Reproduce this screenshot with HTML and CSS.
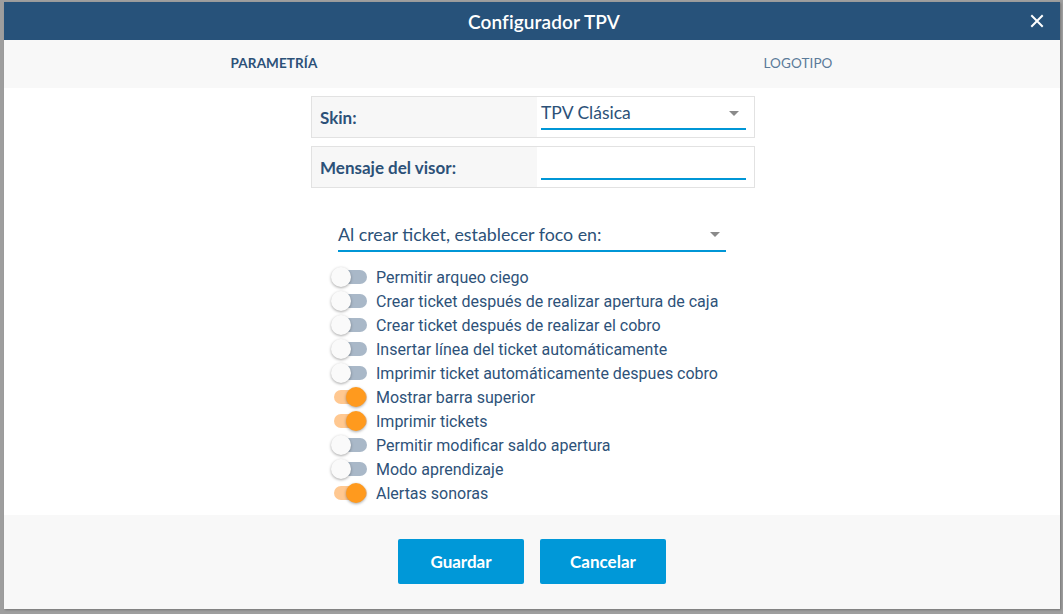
FILE: index.html
```html
<!DOCTYPE html>
<html lang="es">
<head>
<meta charset="utf-8">
<title>Configurador TPV</title>
<link rel="stylesheet" href="styles.css">
</head>
<body>
<div class="dialog">
  <header class="dlg-header">
    <h1 class="dlg-title">Configurador TPV</h1>
    <button class="dlg-close" aria-label="Cerrar">
      <svg width="14" height="14" viewBox="0 0 14 14"><path d="M2 2 L12 12 M12 2 L2 12" stroke="#fff" stroke-width="2" stroke-linecap="square"/></svg>
    </button>
  </header>
  <nav class="tabs">
    <div class="tab active">PARAMETRÍA</div>
    <div class="tab">LOGOTIPO</div>
  </nav>
  <main class="content">
    <div class="field-box">
      <div class="field-label">Skin:</div>
      <div class="field-input">
        <div class="select">
          <span class="select-text">TPV Clásica</span>
          <span class="caret"></span>
        </div>
      </div>
    </div>
    <div class="field-box">
      <div class="field-label">Mensaje del visor:</div>
      <div class="field-input">
        <div class="select"><span class="select-text"></span></div>
      </div>
    </div>
    <div class="column">
      <div class="select wide">
        <span class="select-text">Al crear ticket, establecer foco en:</span>
        <span class="caret"></span>
      </div>
      <ul class="toggles">
        <li class="toggle-row"><span class="toggle"><span class="thumb"></span></span>Permitir arqueo ciego</li>
        <li class="toggle-row"><span class="toggle"><span class="thumb"></span></span>Crear ticket después de realizar apertura de caja</li>
        <li class="toggle-row"><span class="toggle"><span class="thumb"></span></span>Crear ticket después de realizar el cobro</li>
        <li class="toggle-row"><span class="toggle"><span class="thumb"></span></span>Insertar línea del ticket automáticamente</li>
        <li class="toggle-row"><span class="toggle"><span class="thumb"></span></span>Imprimir ticket automáticamente despues cobro</li>
        <li class="toggle-row"><span class="toggle on"><span class="thumb"></span></span>Mostrar barra superior</li>
        <li class="toggle-row"><span class="toggle on"><span class="thumb"></span></span>Imprimir tickets</li>
        <li class="toggle-row"><span class="toggle"><span class="thumb"></span></span>Permitir modificar saldo apertura</li>
        <li class="toggle-row"><span class="toggle"><span class="thumb"></span></span>Modo aprendizaje</li>
        <li class="toggle-row"><span class="toggle on"><span class="thumb"></span></span>Alertas sonoras</li>
      </ul>
    </div>
  </main>
  <footer class="dlg-footer">
    <button class="btn">Guardar</button>
    <button class="btn">Cancelar</button>
  </footer>
</div>
</body>
</html>
```

FILE: styles.css
```css
* { box-sizing: border-box; }
html, body { margin: 0; padding: 0; }
body {
  background: #9e9e9e;
  width: 1063px;
  height: 614px;
  overflow: hidden;
  font-family: "Lato", "Noto Sans", sans-serif;
}
.dialog {
  margin: 2px 3px 5px 4px;
  width: 1056px;
  height: 607px;
  background: #fff;
  display: flex;
  flex-direction: column;
  box-shadow: 1px 1px 2px rgba(0,0,0,0.25);
}
.dlg-header {
  height: 38px;
  background: #27527a;
  display: flex;
  align-items: center;
  justify-content: center;
  padding-left: 24px;
  position: relative;
}
.dlg-title {
  margin: 0;
  color: #fff;
  font-size: 19px;
  font-weight: 600;
  letter-spacing: 0.1px;
}
.dlg-close {
  position: absolute;
  right: 16px;
  top: 12px;
  width: 14px;
  height: 14px;
  padding: 0;
  border: 0;
  background: transparent;
  display: flex;
}
.tabs {
  height: 48px;
  background: #f8f8f8;
  display: flex;
  padding-left: 8px;
}
.tab {
  flex: 1;
  display: flex;
  align-items: center;
  justify-content: center;
  font-size: 13.5px;
  color: #5b7b9a;
  letter-spacing: 0.1px;
  padding-bottom: 2px;
}
.tab.active {
  color: #2c5178;
  font-weight: 700;
}
.content {
  height: 427px;
  padding-top: 8px;
  padding-left: 2px;
  display: flex;
  flex-direction: column;
  align-items: center;
}
.field-box {
  width: 444px;
  height: 42px;
  border: 1px solid #e2e2e2;
  display: flex;
  margin-bottom: 8px;
}
.field-label {
  width: 225px;
  background: #f7f7f7;
  padding-left: 8px;
  display: flex;
  align-items: center;
  font-size: 17px;
  font-weight: 700;
  color: #2c5178;
}
.field-input {
  flex: 1;
  padding: 0 8px 0 4px;
  display: flex;
  align-items: flex-end;
  padding-bottom: 7px;
}
.select {
  width: 100%;
  height: 30px;
  border-bottom: 2px solid #0096d6;
  display: flex;
  align-items: center;
  justify-content: space-between;
  padding-right: 7px;
}
.select-text {
  font-size: 17.5px;
  color: #2c5178;
  margin-top: -3px;
}
.caret {
  width: 0;
  height: 0;
  border-left: 5px solid transparent;
  border-right: 5px solid transparent;
  border-top: 5px solid #8a8a8a;
  margin-top: -1px;
}
.column {
  width: 388px;
  margin-top: 24px;
  margin-left: -2px;
}
.select.wide {
  height: 32px;
  padding-right: 6px;
}
.select.wide .select-text {
  font-size: 17.8px;
  margin-top: -2px;
}
.toggles {
  list-style: none;
  margin: 13px 0 0 -7px;
  padding: 0;
}
.toggle-row {
  height: 24px;
  display: flex;
  align-items: center;
  font-family: "Roboto", sans-serif;
  font-size: 16px;
  color: #2e5279;
  white-space: nowrap;
}
.toggle {
  position: relative;
  width: 36px;
  height: 20px;
  margin-right: 9px;
  flex: none;
}
.toggle::before {
  content: "";
  position: absolute;
  left: 3px;
  right: 0;
  top: 3px;
  height: 14px;
  border-radius: 7px;
  background: #a9b8c8;
}
.thumb {
  position: absolute;
  left: 0;
  top: 0;
  width: 20px;
  height: 20px;
  border-radius: 50%;
  background: #fafafa;
  box-shadow: 0 1px 3px rgba(0,0,0,0.35);
}
.toggle.on::before { background: #ffc891; }
.toggle.on .thumb {
  left: 15px;
  background: #ff9a1e;
}
.dlg-footer {
  height: 94px;
  background: #f8f8f8;
  display: flex;
  justify-content: center;
  align-items: flex-start;
  padding-top: 24px;
  gap: 16px;
}
.btn {
  width: 126px;
  height: 45px;
  border: 0;
  border-radius: 2px;
  background: #0098d8;
  color: #fff;
  font-family: "Lato", "Noto Sans", sans-serif;
  font-size: 17px;
  font-weight: 700;
}
```
